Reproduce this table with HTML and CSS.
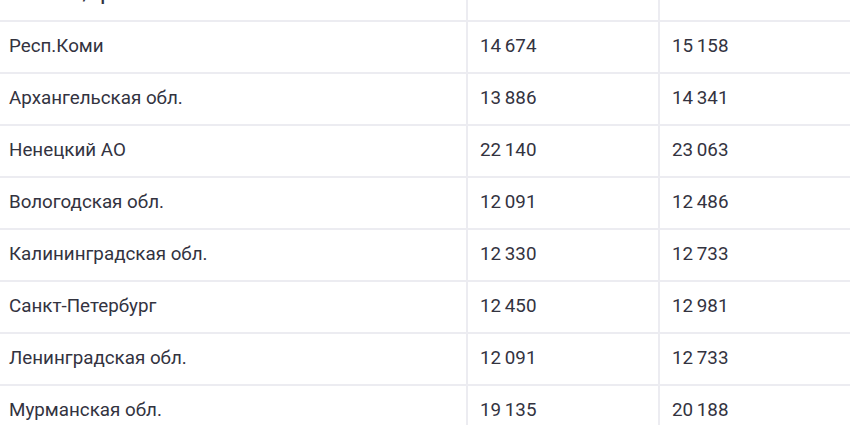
FILE: index.html
```html
<!DOCTYPE html>
<html lang="ru">
<head>
<meta charset="utf-8">
<title>Таблица</title>
<link rel="stylesheet" href="styles.css">
</head>
<body>
<div class="wrap">
<table class="data">
  <colgroup>
    <col class="c-region">
    <col class="c-num">
    <col class="c-num2">
  </colgroup>
  <thead>
    <tr><th>Область/край</th><th>2023 г.</th><th>2024 г.</th></tr>
  </thead>
  <tbody>
    <tr><td>Респ.Коми</td><td>14 674</td><td>15 158</td></tr>
    <tr><td>Архангельская обл.</td><td>13 886</td><td>14 341</td></tr>
    <tr><td>Ненецкий АО</td><td>22 140</td><td>23 063</td></tr>
    <tr><td>Вологодская обл.</td><td>12 091</td><td>12 486</td></tr>
    <tr><td>Калининградская обл.</td><td>12 330</td><td>12 733</td></tr>
    <tr><td>Санкт-Петербург</td><td>12 450</td><td>12 981</td></tr>
    <tr><td>Ленинградская обл.</td><td>12 091</td><td>12 733</td></tr>
    <tr><td>Мурманская обл.</td><td>19 135</td><td>20 188</td></tr>
  </tbody>
</table>
</div>
</body>
</html>
```
FILE: styles.css
```css
html, body {
  margin: 0;
  padding: 0;
  background: #ffffff;
  overflow: hidden;
}
.wrap {
  margin-top: -30px;
  width: 1000px;
}
.data {
  border-collapse: collapse;
  width: 1000px;
  font-family: Roboto, "Noto Sans", sans-serif;
  font-size: 18.8px;
  line-height: 22px;
  color: #33333f;
  table-layout: fixed;
}
.c-region { width: 467px; }
.c-num { width: 192px; }
.c-num2 { width: 341px; }
.data th, .data td {
  text-align: left;
  font-weight: 400;
  padding: 13px 11px 15px 12px;
  border-bottom: 2px solid #ececf1;
  border-left: 2px solid #ececf1;
  vertical-align: top;
}
.data td + td {
  word-spacing: -1px;
}
.data th:first-child, .data td:first-child {
  border-left: none;
  padding-left: 9px;
}
.data th {
  font-weight: 500;
}
```
